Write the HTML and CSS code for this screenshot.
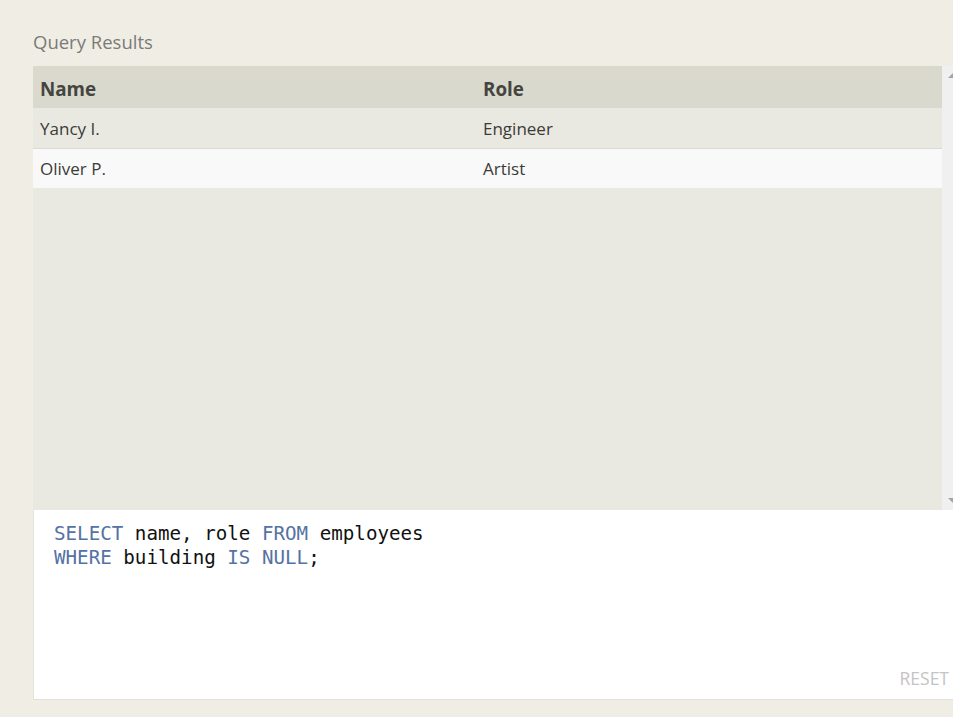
FILE: index.html
```html
<!DOCTYPE html>
<html>
<head>
<meta charset="utf-8">
<link rel="stylesheet" href="styles.css">
</head>
<body>
<div class="page">
  <div class="title">Query Results</div>
  <div class="results">
    <div class="scroll-area">
      <table class="grid">
        <thead>
          <tr><th class="c1">Name</th><th>Role</th></tr>
        </thead>
        <tbody>
          <tr class="odd"><td>Yancy I.</td><td>Engineer</td></tr>
          <tr class="even"><td>Oliver P.</td><td>Artist</td></tr>
        </tbody>
      </table>
    </div>
    <div class="scrollbar">
      <span class="arrow up"></span>
      <span class="arrow down"></span>
    </div>
  </div>
  <div class="editor">
    <pre class="code"><span class="kw">SELECT</span> name, role <span class="kw">FROM</span> employees
<span class="kw">WHERE</span> building <span class="kw">IS</span> <span class="kw">NULL</span>;</pre>
    <div class="reset">RESET</div>
  </div>
</div>
</body>
</html>
```
FILE: styles.css
```css
html, body {
  margin: 0;
  padding: 0;
  background: #f0ede5;
  font-family: "Open Sans", "Noto Sans", sans-serif;
}
.page {
  padding: 29px 0 0 33px;
  width: 920px;
}
.title {
  font-size: 18.5px;
  color: #7b7b77;
  line-height: 26px;
  height: 37px;
}
.results {
  display: flex;
  height: 444px;
  background: #eae9e1;
}
.scroll-area {
  flex: 1;
}
.grid {
  width: 100%;
  border-collapse: collapse;
  table-layout: fixed;
}
.grid th {
  background: #d9d9ce;
  text-align: left;
  font-size: 18.8px;
  font-weight: 700;
  color: #454540;
  height: 42px;
  padding: 3px 7px 0 7px;
  box-sizing: border-box;
}
.grid th.c1 {
  width: 443px;
}
.grid td {
  font-size: 17px;
  color: #3b3b38;
  padding: 0 7px;
}
.grid tr.odd td {
  background: #eae9e1;
  height: 40px;
  border-bottom: 1px solid #dcdbd3;
}
.grid tr.even td {
  background: #f9f9f9;
  height: 39px;
}
.scrollbar {
  width: 11px;
  background: #f0f0f0;
  position: relative;
}
.arrow {
  position: absolute;
  right: 0;
  width: 0;
  height: 0;
}
.arrow.up {
  top: 7px;
  border-left: 5px solid transparent;
  border-bottom: 5px solid #a3a3a3;
}
.arrow.down {
  bottom: 7px;
  border-left: 5px solid transparent;
  border-top: 5px solid #a3a3a3;
}
.editor {
  background: #ffffff;
  height: 190px;
  border-left: 1px solid #e4e3dc;
  border-bottom: 1px solid #e0dfd8;
  box-sizing: border-box;
  display: flex;
  flex-direction: column;
  justify-content: space-between;
}
.code {
  margin: 0;
  padding: 12px 0 0 20px;
  font-family: "DejaVu Sans Mono", "Liberation Mono", monospace;
  font-size: 19.2px;
  line-height: 24px;
  color: #111111;
}
.kw {
  color: #5472a3;
}
.reset {
  align-self: flex-end;
  font-size: 17.5px;
  color: #c4c4c4;
  padding: 0 4px 10px 0;
  line-height: 22px;
}
```
